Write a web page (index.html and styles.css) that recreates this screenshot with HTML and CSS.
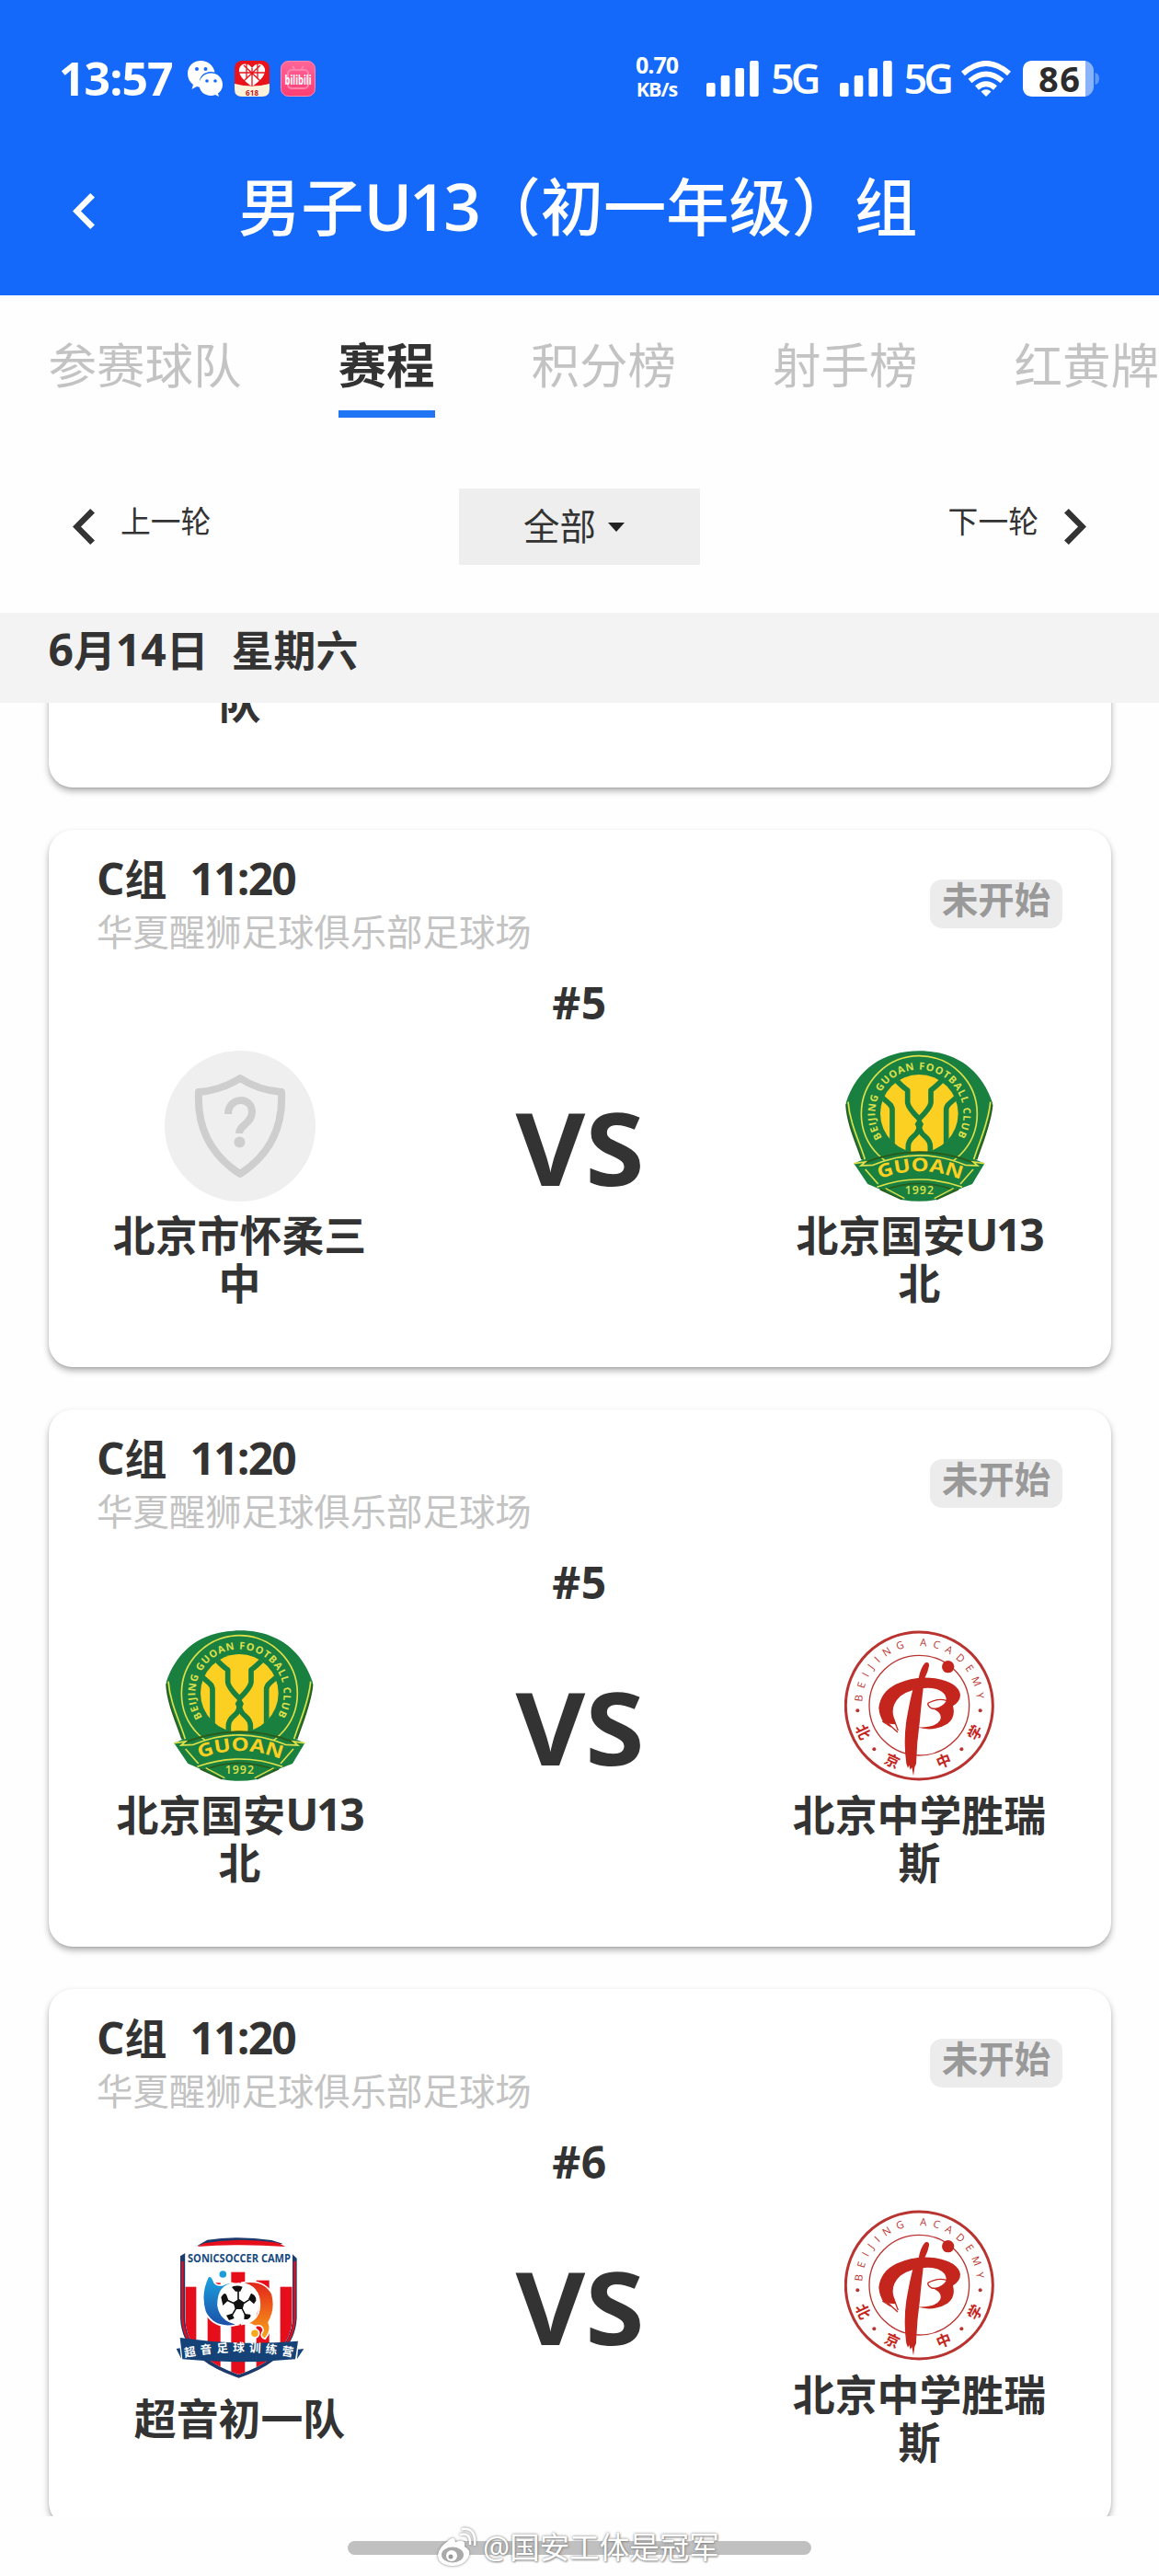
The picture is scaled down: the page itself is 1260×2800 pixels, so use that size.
FILE: index.html
```html
<!DOCTYPE html>
<html lang="zh-CN">
<head>
<meta charset="utf-8">
<title>男子U13（初一年级）组</title>
<link rel="stylesheet" href="styles.css">
</head>
<body>
<svg class="defs" width="0" height="0" aria-hidden="true">
  <defs>
    <linearGradient id="sky" x1="0" y1="0" x2="0" y2="1"><stop offset="0" stop-color="#1aa3e0"/><stop offset="1" stop-color="#1d4fa8"/></linearGradient>
    <linearGradient id="sun" x1="0" y1="0" x2="0" y2="1"><stop offset="0" stop-color="#e2231a"/><stop offset="1" stop-color="#f9a61a"/></linearGradient>
    <linearGradient id="pink" x1="0" y1="0" x2="0" y2="1"><stop offset="0" stop-color="#ff6699"/><stop offset="1" stop-color="#ff3d73"/></linearGradient>
    <path id="arc-club" d="M177 349A144 144 0 1 1 419 349"/>
    <path id="arc-guoan" d="M160 487Q298 430 437 487"/>
    <path id="arc-academy" d="M112 300A187 187 0 0 1 486 306"/>
    <path id="arc-camp" d="M122 458Q300 421 482 458"/>
    <clipPath id="ball"><circle cx="298" cy="270" r="128"/></clipPath>
    <clipPath id="shield"><path d="M123 118L190 84Q296 60 410 86L472 125V330Q470 455 298 514Q124 455 123 330Z"/></clipPath>
  </defs>
  <symbol id="chevron" viewBox="0 0 24 39"><path fill="currentColor" d="M19.2 0L24 4.5L9 19.5L24 34.5L19.2 39L0 19.5Z"/></symbol>
  <symbol id="signal" viewBox="0 0 57 39"><g fill="#fff"><rect y="24" width="9.6" height="15" rx="2"/><rect x="15.7" y="16" width="9.6" height="23" rx="2"/><rect x="31.4" y="8" width="9.6" height="31" rx="2"/><rect x="47.1" width="9.6" height="39" rx="2"/></g></symbol>
  <symbol id="crest-unknown" viewBox="0 0 164 164">
    <circle cx="82" cy="82" r="82" fill="#efefef"/>
    <path d="M82 30Q102 43 127 45Q130 103 82 134Q34 103 37 45Q62 43 82 30Z" fill="none" stroke="#cecece" stroke-width="8" stroke-linejoin="round"/>
    <path d="M69 69C69 50 95 49 95 67C95 79 81 81 81 90" fill="none" stroke="#cecece" stroke-width="8"/>
    <circle cx="81.500" cy="99.500" r="6" fill="#cecece"/>
  </symbol>
  <symbol id="crest-guoan" viewBox="54 65 492 492">
    <path d="M59 235C95 125 180 66 298 66S500 125 537 235C532 305 500 370 484 421L511 433L471 500L438 513L350 552Q298 561 244 552L160 513L130 500L85 433L112 421C96 370 62 305 59 235Z" fill="#19803f"/>
    <path d="M66 232C72 305 105 365 121 420M530 232C524 305 492 365 476 420" fill="none" stroke="#dfe04a" stroke-width="5"/>
    <path d="M60 240C63 305 95 370 111 420M536 240C531 305 501 370 485 420" fill="none" stroke="#295c1d" stroke-width="5"/>
    <circle cx="298" cy="271" r="189" fill="none" stroke="#dfe04a" stroke-width="5"/>
    <circle cx="298" cy="270" r="127" fill="#fbd022"/>
    <g fill="none" stroke="#19803f" stroke-width="17" stroke-linejoin="round" clip-path="url(#ball)">
      <path d="M222 160Q245 184 260 194V235Q262 252 298 288Q334 252 336 235V194Q350 184 374 160"/>
      <path d="M166 208L200 238Q210 246 210 258V390M430 208L396 238Q386 246 386 258V390"/>
      <path d="M262 410V378Q262 359 280 344Q298 330 298 308Q298 330 316 344Q334 359 334 378V410"/>
    </g>
    <path d="M298 282L284 304L298 335L312 304Z" fill="#19803f"/>
    <path d="M85 433L160 513Q298 455 438 513L511 433L480 428L444 436Q298 370 150 436L118 427Z" fill="#19803f"/>
    <path d="M118 431Q298 361 478 431" fill="none" stroke="#295c1d" stroke-width="6"/>
    <path d="M85 433L122 428L108 440L148 438Q298 375 448 438L488 440L474 428L511 433M160 510Q298 460 438 510M122 452L164 500M474 452L432 500" fill="none" stroke="#dfe04a" stroke-width="5"/>
    <path d="M170 517L242 550M426 517L354 550M182 521Q298 475 414 521" fill="none" stroke="#295c1d" stroke-width="5"/>
    <path d="M188 514L250 547M410 514L347 547" fill="none" stroke="#dfe04a" stroke-width="4"/>
    <text class="crest-latin heavy" font-size="33" fill="#dfe04a"><textPath href="#arc-club" textLength="610">BEIJING GUOAN FOOTBALL CLUB</textPath></text>
    <text class="crest-latin heavy" font-size="60" fill="#fbd022"><textPath href="#arc-guoan" startOffset="9" textLength="272" lengthAdjust="spacingAndGlyphs">GUOAN</textPath></text>
    <text class="crest-latin" x="251" y="532" font-size="37" fill="#dfe04a" textLength="94">1992</text>
  </symbol>
  <symbol id="crest-academy" viewBox="54 65 492 492">
    <circle cx="298" cy="311" r="240" fill="#fff" stroke="#b93430" stroke-width="9"/>
    <circle cx="298" cy="310" r="163" fill="none" stroke="#b93430" stroke-width="4"/>
    <circle cx="392" cy="184" r="20" fill="#c4261e"/>
    <g fill="#c4261e">
      <path d="M296 222Q303 185 318 171Q331 167 330 181Q327 200 315 223Q305 300 300 360Q290 430 288 500L283 512L279 540L274 512L269 520L265 505L261 514L256 500Q246 430 256 360Q268 290 282 240Z"/>
      <path d="M182 366Q168 345 166 318Q172 265 225 240Q285 212 350 222Q425 235 432 275Q432 297 408 312Q418 350 390 370Q345 398 290 381Q350 384 366 358Q376 336 342 321Q372 318 386 296Q388 262 340 254Q280 250 236 280Q205 310 214 345L222 372Q200 372 182 366Z"/>
    </g>
    <path d="M404 302Q370 280 328 302Q322 309 338 320M402 307Q370 325 338 320M178 362L206 380M186 360L228 398M215 355L229 392" fill="none" stroke="#c4261e" stroke-width="4"/>
    <g fill="#b93430"><circle cx="97" cy="327" r="6"/><circle cx="497" cy="327" r="6"/><circle cx="151" cy="453" r="6"/><circle cx="436" cy="453" r="6"/></g>
    <text class="crest-thin" font-size="34" fill="#b93430"><textPath href="#arc-academy" startOffset="2" textLength="568">BEIJING ACADEMY</textPath></text>
    <g class="crest-cjk" font-size="48" fill="#c4261e" text-anchor="middle">
      <text transform="translate(114 397) rotate(65)" y="17">北</text>
      <text transform="translate(210 492) rotate(25)" y="17">京</text>
      <text transform="translate(378 492) rotate(-22)" y="17">中</text>
      <text transform="translate(481 399) rotate(-63)" y="17">学</text>
    </g>
  </symbol>
  <symbol id="crest-sonic" viewBox="56 55 492 492">
    <path d="M162 94L195 75Q296 60 405 76L441 87L418 93Q296 72 180 92ZM107 160V128L123 118V330Q128 450 298 514Q468 450 473 330V122L487 135V330Q480 465 298 525Q112 465 107 330Z" fill="#1c3a6b"/>
    <g clip-path="url(#shield)">
      <rect x="110" y="88" width="380" height="430" fill="#fff"/>
      <g fill="#e60e1b"><rect x="120" y="228" width="39" height="240"/><rect x="273" y="180" width="45" height="340"/><rect x="196" y="215" width="42" height="300"/><rect x="355" y="207" width="42" height="300"/><rect x="433" y="228" width="42" height="240"/></g>
    </g>
    <path d="M162 97L185 86Q296 66 425 84L450 97Q296 86 162 97Z" fill="#e60e1b"/>
    <path d="M114 145V330Q118 390 150 425M480 145V330Q476 390 445 425" fill="none" stroke="#e60e1b" stroke-width="7"/>
    <g stroke="#fff" stroke-width="5">
      <circle cx="298" cy="282" r="65" fill="#fff"/>
      <path d="M198 194Q210 190 215 207Q220 228 248 221Q264 210 285 219Q230 220 230 288Q238 343 300 350Q220 372 188 310Q170 250 198 194Z" fill="url(#sky)"/>
      <path d="M305 215Q380 200 407 252Q420 300 395 345Q407 370 383 398Q363 390 378 370Q374 349 350 356Q330 342 305 351Q366 343 366 286Q365 225 305 215Z" fill="url(#sun)"/>
      <circle cx="246" cy="187" r="14" fill="#1b9ddb"/><circle cx="350" cy="380" r="14" fill="#f6a91b"/>
    </g>
    <g fill="#111"><path d="M298 267L316 279L310 301H286L280 279ZM275 229Q291 220 310 228L303 243H287ZM240 262Q252 243 258 255L264 272L246 289ZM338 249Q355 255 354 273L347 284L329 268ZM257 321L276 315L283 331L266 337ZM316 316L335 318Q341 326 327 334L315 334Z"/><path d="M296 240V270M260 272L286 284M332 270L310 284M276 320L288 300M320 322L308 298" stroke="#111" stroke-width="5"/></g>
    <path d="M106 394Q300 422 491 405L482 464Q300 482 114 464ZM94 430L106 428L110 462ZM491 432L510 430L488 463Z" fill="#154377"/>
    <text class="crest-camp" x="131" y="149" font-size="35" fill="#164a80" textLength="336" lengthAdjust="spacingAndGlyphs">SONICSOCCER CAMP</text>
    <text class="crest-cjk" font-size="38" fill="#fff"><textPath href="#arc-camp" textLength="354">超音足球训练营</textPath></text>
  </symbol>
</svg>

<header class="app-header">
  <div class="status">
    <div class="status-left">
      <span class="clock">13:57</span>
      <svg class="app-icon" viewBox="0 0 38 39"><path fill="#fff" d="M14.500 0C6 0 0 6 0 14C0 19 2 23 6 26L4.500 31L10 28Q13 29 14.500 28.500C9 17 20 10 29.500 12.500C28 5 22 0 14.500 0Z"/><path fill="#fff" d="M25.500 13.500C18 13.500 12.500 19 12.500 26S18 38 25.500 38Q28 38 30 37L34 39L33 35.500C36 33.500 38 30 38 26C38 19 33 13.500 25.500 13.500Z"/><g fill="#1469fa"><circle cx="10" cy="9" r="2"/><circle cx="19.500" cy="9" r="2"/><circle cx="21" cy="22" r="1.800"/><circle cx="30" cy="22" r="1.800"/></g></svg>
      <svg class="app-icon" viewBox="0 0 38 39"><rect width="38" height="39" rx="8" fill="#e9131b"/><path d="M0 25Q19 30 38 25V31Q38 39 30 39H8Q0 39 0 31Z" fill="#fff3dc"/><path d="M19 28C9 21 4 15 5 9C7 2 15 2 19 8C23 2 31 2 33 9C34 15 29 21 19 28Z" fill="#fff"/><path d="M10 5L28 22M28 5L10 22M5 13H33M13 3V20M25 3V20M19 8V28" stroke="#e9131b" stroke-width="1.300"/><text class="app-618" x="12" y="37.500" textLength="14">618</text></svg>
      <svg class="app-icon" viewBox="0 0 38 39"><rect x=".5" y=".5" width="37" height="38" rx="8" fill="url(#pink)" stroke="#ff8ab0"/><g fill="none" stroke="#ff85ac" stroke-width="2"><rect x="8" y="10" width="22" height="20" rx="4"/><path d="M13 6L16 10M25 6L22 10"/></g><text class="app-bili" x="4.500" y="26" textLength="29" lengthAdjust="spacingAndGlyphs">bilibili</text></svg>
    </div>
    <div class="status-right">
      <div class="speed"><span>0.70</span><small>KB/s</small></div>
      <svg class="bars"><use href="#signal"/></svg><span class="net">5G</span>
      <svg class="bars"><use href="#signal"/></svg><span class="net">5G</span>
      <svg class="wifi" viewBox="0 0 54 39"><g fill="none" stroke="#fff" stroke-width="6"><path d="M2 14Q27 -8 52 14"/><path d="M9.500 22Q27 7 44.500 22"/><path d="M17 29.500Q27 21 37 29.500"/></g><path d="M27 39L21.500 33.500Q27 29 32.500 33.500Z" fill="#fff"/></svg>
      <svg class="battery" viewBox="0 0 83 39"><rect width="77" height="39" rx="11" fill="#89b4fc"/><path d="M11 0H68V39H11Q0 39 0 28V11Q0 0 11 0Z" fill="#fff"/><path d="M78.500 13Q83 14 83 19.500T78.500 26Z" fill="#5f98fb"/><text class="battery-text" x="17" y="33.500" textLength="45">86</text></svg>
    </div>
  </div>
  <nav class="nav">
    <svg class="chevron back"><use href="#chevron"/></svg>
    <h1 class="title">男子<span class="title-num">U13</span>（初一年级）组</h1>
  </nav>
</header>

<div class="tabs">
  <span class="tab">参赛球队</span>
  <span class="tab active">赛程</span>
  <span class="tab">积分榜</span>
  <span class="tab">射手榜</span>
  <span class="tab">红黄牌</span>
</div>

<div class="rounds">
  <div class="round"><svg class="chevron"><use href="#chevron"/></svg><span>上一轮</span></div>
  <div class="select">全部<i class="caret"></i></div>
  <div class="round next"><span>下一轮</span><svg class="chevron flip"><use href="#chevron"/></svg></div>
</div>

<div class="date"><span class="num">6</span>月<span class="num">14</span>日<span class="weekday">星期六</span></div>

<main class="list">
  <section class="card card-scrolled"><div class="name"><br>队</div></section>

  <section class="card">
    <div class="card-head">
      <div><div class="group"><span class="num">C</span>组<span class="num time">11:20</span></div><div class="venue">华夏醒狮足球俱乐部足球场</div></div>
      <span class="badge">未开始</span>
    </div>
    <div class="round-no">#5</div>
    <div class="match">
      <div class="team"><svg class="crest"><use href="#crest-unknown"/></svg><div class="name">北京市怀柔三<br>中</div></div>
      <div class="vs">VS</div>
      <div class="team"><svg class="crest"><use href="#crest-guoan"/></svg><div class="name">北京国安<span class="num tight">U13</span><br>北</div></div>
    </div>
  </section>

  <section class="card">
    <div class="card-head">
      <div><div class="group"><span class="num">C</span>组<span class="num time">11:20</span></div><div class="venue">华夏醒狮足球俱乐部足球场</div></div>
      <span class="badge">未开始</span>
    </div>
    <div class="round-no">#5</div>
    <div class="match">
      <div class="team"><svg class="crest"><use href="#crest-guoan"/></svg><div class="name">北京国安<span class="num tight">U13</span><br>北</div></div>
      <div class="vs">VS</div>
      <div class="team"><svg class="crest"><use href="#crest-academy"/></svg><div class="name">北京中学胜瑞<br>斯</div></div>
    </div>
  </section>

  <section class="card">
    <div class="card-head">
      <div><div class="group"><span class="num">C</span>组<span class="num time">11:20</span></div><div class="venue">华夏醒狮足球俱乐部足球场</div></div>
      <span class="badge">未开始</span>
    </div>
    <div class="round-no">#6</div>
    <div class="match">
      <div class="team"><svg class="crest"><use href="#crest-sonic"/></svg><div class="name">超音初一队</div></div>
      <div class="vs">VS</div>
      <div class="team"><svg class="crest"><use href="#crest-academy"/></svg><div class="name">北京中学胜瑞<br>斯</div></div>
    </div>
  </section>
</main>

<footer class="home">
  <div class="home-bar"></div>
  <div class="watermark">
    <svg class="weibo" viewBox="0 0 44 44"><g fill="#fff"><path d="M13 15Q20 8 21 16Q33 12 31 21Q39 25 35 33Q29 43 16 42Q2 40 2 30Q3 22 13 15Z"/><path d="M26 8Q38 5 37 19M28 2Q44 0 42 20" fill="none" stroke="#fff" stroke-width="2.500"/></g><ellipse cx="18" cy="30" rx="12" ry="8.500" fill="#aaa"/><circle cx="17" cy="31" r="6" fill="#fff"/><circle cx="16" cy="32" r="2.500" fill="#999"/></svg>
    <span>@国安工体是冠军</span>
  </div>
</footer>
</body>
</html>
```

FILE: styles.css
```css
* { box-sizing: border-box; }
body {
  margin: 0;
  width: 1260px;
  height: 2800px;
  overflow: hidden;
  background: #fefefe;
  color: #333;
  font-family: "Open Sans", "Noto Sans CJK SC", sans-serif;
}
svg { display: block; flex: none; }
.defs { position: absolute; }

.app-header { height: 321px; background: #1469fa; color: #fff; }
.status {
  display: flex;
  justify-content: space-between;
  height: 140px;
  padding: 30px 65px 0 64px;
}
.status-left, .status-right { display: flex; align-items: center; }
.clock { width: 140px; font-size: 50px; font-weight: 700; letter-spacing: -1px; line-height: 50px; }
.app-icon { width: 38px; height: 39px; margin-right: 12.500px; }
.app-618 { font: 700 8px "Open Sans", sans-serif; fill: #c8161d; }
.app-bili { font: 700 14px "Open Sans", sans-serif; fill: #fff; }
.speed { width: 54px; text-align: center; font-weight: 700; margin: -4px 27px 0 0; font-size: 25px; line-height: 27px; letter-spacing: -1px; white-space: nowrap; }
.speed span, .speed small { display: block; }
.speed small { font-size: 21.500px; line-height: 25px; }
.bars { width: 57px; height: 39px; }
.net { width: 74.500px; margin-left: 13px; font-size: 45px; font-weight: 600; line-height: 50px; letter-spacing: -4px; }
.net + .wifi { margin-left: -12px; }
.wifi { width: 54px; height: 39px; margin-right: 13px; }
.battery { width: 83px; height: 39px; }
.battery-text { font: 700 38px "Open Sans", sans-serif; fill: #2c2c2c; }

.nav { display: flex; align-items: center; height: 168px; padding-left: 79px; }
.chevron { width: 24px; height: 39px; }
.back { margin-top: 10px; }
.title { margin: 0 0 0 156px; font-size: 68.250px; font-weight: 500; line-height: 80px; white-space: nowrap; }
.title-num { font-size: 71px; font-weight: 600; letter-spacing: -3.300px; }

.tabs { display: flex; gap: 105px; padding-left: 52.500px; white-space: nowrap; }
.tab { padding: 48px 0 21px; border-bottom: 8px solid transparent; font-size: 52.500px; line-height: 56px; color: #c3c3c3; }
.tab.active { color: #333; font-weight: 700; border-color: #1f75f3; }

.rounds { display: flex; align-items: center; justify-content: space-between; height: 83px; margin: 77px 79px 52px; }
.round { display: flex; align-items: center; width: 300px; gap: 28px; font-size: 32.800px; }
.round span { margin-bottom: 11px; line-height: 46px; }
.next { justify-content: flex-end; }
.flip { transform: scaleX(-1); }
.select { display: flex; align-items: center; justify-content: center; gap: 13px; width: 262px; height: 83px; background: #eee; font-size: 39.400px; padding: 0 12px 5px 0; }
.caret { border: 9.500px solid transparent; border-top: 10px solid #222; border-bottom: 0; margin-top: 6px; }

.date { height: 98px; padding: 14px 52.500px 0; background: #f3f3f3; font-size: 45.900px; font-weight: 700; line-height: 53px; }
.num { font-size: 48px; line-height: 1; }
.tight { letter-spacing: -2.300px; }
.weekday { margin-left: 25px; }

.list { height: 1971px; overflow: hidden; padding: 0 52.500px; }
.card {
  height: 584px;
  margin-bottom: 46px;
  padding: 27px 52.500px 0;
  border-radius: 26px;
  background: #fff;
  box-shadow: 0 4px 7px rgba(0, 0, 0, .3), 0 1px 2px rgba(0, 0, 0, .1);
}
.card-scrolled { margin-top: -492px; padding-top: 413px; }
.card-scrolled .name { width: 311px; }
.card-head { display: flex; justify-content: space-between; align-items: flex-start; }
.group { font-size: 45.900px; font-weight: 700; line-height: 53px; height: 53px; }
.time { margin-left: 25px; letter-spacing: -1.800px; }
.venue { margin-top: 8px; font-size: 39.400px; line-height: 46px; color: #c3c3c3; }
.badge { width: 144px; height: 53px; margin-top: 27px; border-radius: 13px; background: #ececec; color: #999; font-size: 39.400px; font-weight: 700; line-height: 44px; text-align: center; }
.round-no { margin-top: 27px; height: 53px; font-size: 48px; font-weight: 700; line-height: 53px; letter-spacing: .6px; text-align: center; }
.match { display: flex; align-items: center; justify-content: space-between; height: 278px; margin-top: 26px; }
.team { display: flex; flex-direction: column; align-items: center; width: 311px; gap: 10px; }
.crest { width: 164px; height: 164px; }
.name { font-size: 45.900px; font-weight: 700; line-height: 52px; text-align: center; white-space: nowrap; }
.vs { margin: 0 0 69px; font-size: 109px; font-weight: 700; line-height: 109px; transform: scaleX(1.07); }

.crest-latin { font-family: "Open Sans", sans-serif; font-weight: 600; }
.heavy { font-weight: 700; }
.crest-thin { font-family: "Open Sans", sans-serif; }
.crest-camp { font-family: "Open Sans", sans-serif; font-weight: 700; }
.crest-cjk { font-family: "Noto Sans CJK SC", sans-serif; font-weight: 700; }

.home { position: relative; height: 65px; padding-top: 27px; }
.home-bar { width: 504px; height: 15px; margin: 0 auto; border-radius: 8px; background: #c0c0c0; }
.watermark { position: absolute; left: 474px; top: 12px; display: flex; align-items: center; gap: 7px; color: #fff; font-size: 32.500px; line-height: 44px; white-space: nowrap; text-shadow: 0 0 3px #777, 1px 1px 2px #999; }
.weibo { width: 44px; height: 44px; filter: drop-shadow(0 0 1.500px #777); }
```
